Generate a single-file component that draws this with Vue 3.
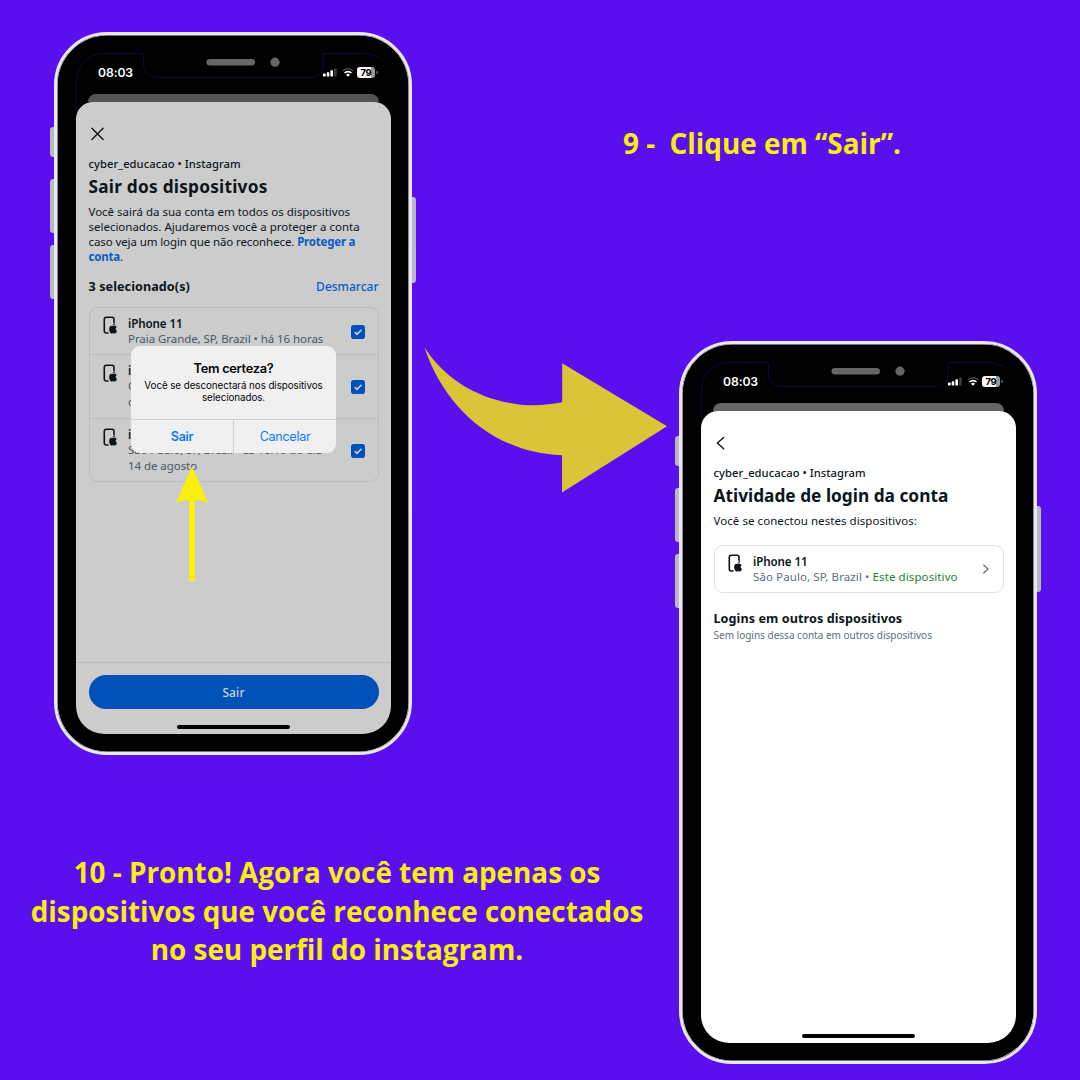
<script setup>
const phones = [
  { id: 'confirm', kind: 'dim', left: 54, top: 32 },
  { id: 'activity', kind: 'light', left: 679, top: 341 },
]
const devices = [
  { lines: ['Praia Grande, SP, Brazil • há 16 horas'] },
  { lines: ['Guarujá, SP, Brazil', 'de agosto'] },
  { lines: ['São Paulo, SP, Brazil • às 16:10 do dia', '14 de agosto'] },
]
</script>

<template>
  <main class="poster">
    <p class="caption step9">9 -&nbsp; Clique em “Sair”.</p>
    <p class="caption step10">10 - Pronto! Agora você tem apenas os<br />dispositivos que você reconhece conectados<br />no seu perfil do instagram.</p>

    <section
      v-for="p in phones"
      :key="p.id"
      class="phone"
      :class="p.kind"
      :style="{ left: p.left + 'px', top: p.top + 'px' }"
    >
      <i class="key k1"></i><i class="key k2"></i><i class="key k3"></i><i class="key k4"></i>
      <div class="body">
        <svg class="notch" width="357" height="90" viewBox="0 0 357 90" fill="none">
          <path d="M22.3 78V50C22.3 33 34 21.5 51 21.5H89.5V31C89.5 41 95 45.5 104 45.5H254C263 45.5 269.3 41 269.3 31V21.5H309C317 21.5 323 24 328 28" stroke="#160640" stroke-width="0.9" />
          <rect x="152.5" y="27" width="48.5" height="6.6" rx="3.3" fill="#666" />
          <circle cx="221" cy="30.2" r="4.6" fill="#666" />
        </svg>
        <header class="status">
          <span class="time">08:03</span>
          <svg class="signal" width="14" height="9" viewBox="0 0 14 9" fill="#fff">
            <rect x="0" y="5.6" width="2.6" height="3" rx=".7" />
            <rect x="3.7" y="4.2" width="2.6" height="4.4" rx=".7" />
            <rect x="7.4" y="2.2" width="2.6" height="6.4" rx=".7" />
            <rect x="11.1" y="0.2" width="2.6" height="8.4" rx=".7" fill="#3c3c3c" />
          </svg>
          <svg class="wifi" width="12" height="9" viewBox="0 0 12 9" fill="none">
            <path d="M.9 2.9A7.3 7.3 0 0 1 11.1 2.9" stroke="#444" stroke-width="1.5" />
            <path d="M2.5 5A4.9 4.9 0 0 1 9.5 5" stroke="#fff" stroke-width="1.7" />
            <path d="M6 8.8L4 6.8A2.9 2.9 0 0 1 8 6.8Z" fill="#fff" />
          </svg>
          <span class="battery">79</span><i class="nub"></i>
        </header>
        <div class="behind"></div>
        <div class="sheet">
          <svg v-if="p.kind === 'dim'" class="nav" width="20" height="14" viewBox="0 0 20 14" fill="none" stroke="#0c151b" stroke-width="1.4" stroke-linecap="round">
            <path d="M2.9 1.2L14.1 12.4M14.1 1.2L2.9 12.4" />
          </svg>
          <svg v-else class="nav" width="20" height="14" viewBox="0 0 20 14" fill="none" stroke="#0c151b" stroke-width="1.4" stroke-linecap="round">
            <path d="M9.7 1.4L3.4 7.1L9.7 12.8" />
          </svg>
          <p class="account">cyber_educacao • Instagram</p>

          <template v-if="p.kind === 'dim'">
            <h1 class="leave">Sair dos dispositivos</h1>
            <p class="intro">Você sairá da sua conta em todos os dispositivos<br />selecionados. Ajudaremos você a proteger a conta<br /><span class="tight">caso veja um login que não reconhece. </span><b>Proteger a<br />conta</b>.</p>
            <div class="pick"><h2>3 selecionado(s)</h2><span>Desmarcar</span></div>
            <ul class="card">
              <li v-for="(d, i) in devices" :key="i">
                <svg class="device" width="16" height="19" viewBox="0 0 16 19">
                  <path d="M5 17H3.3C2.1 17 1.3 16.2 1.3 15V3.4C1.3 2.2 2.1 1.3 3.3 1.3H9C10.2 1.3 11 2.2 11 3.4V6.3" fill="none" stroke="#0c151b" stroke-width="1.6" stroke-linecap="round" />
                  <path d="M10.2 10.1C9.2 9.5 6.1 9.4 6.1 13C6.1 15.6 7.7 17.9 9 17.6C9.8 17.2 10.6 17.2 11.4 17.6C12.6 17.9 13.7 16.2 14 15.1C12.2 14.2 12.3 12 13.7 11.1C12.9 9.7 11.2 9.7 10.2 10.1Z" fill="#0c151b" />
                  <path d="M10 9.5C9.9 8.2 10.9 7.2 12 7C12.1 8.4 11.2 9.4 10 9.5Z" fill="#0c151b" />
                </svg>
                <div class="info"><strong>iPhone 11</strong><span v-for="l in d.lines" :key="l" :class="{ long: l.startsWith('São') }">{{ l }}</span></div>
                <svg class="check" width="14" height="14" viewBox="0 0 14 14">
                  <rect width="14" height="14" rx="2.8" fill="#0052b8" />
                  <path d="M3.8 7.2L6 9.3L10.5 4.8" fill="none" stroke="#cdd3da" stroke-width="1.6" />
                </svg>
              </li>
            </ul>
            <footer class="foot"><button>Sair</button></footer>
          </template>

          <template v-else>
            <h1>Atividade de login da conta</h1>
            <p class="intro connected">Você se conectou nestes dispositivos:</p>
            <ul class="card">
              <li>
                <svg class="device" width="16" height="19" viewBox="0 0 16 19">
                  <path d="M5 17H3.3C2.1 17 1.3 16.2 1.3 15V3.4C1.3 2.2 2.1 1.3 3.3 1.3H9C10.2 1.3 11 2.2 11 3.4V6.3" fill="none" stroke="#0c151b" stroke-width="1.6" stroke-linecap="round" />
                  <path d="M10.2 10.1C9.2 9.5 6.1 9.4 6.1 13C6.1 15.6 7.7 17.9 9 17.6C9.8 17.2 10.6 17.2 11.4 17.6C12.6 17.9 13.7 16.2 14 15.1C12.2 14.2 12.3 12 13.7 11.1C12.9 9.7 11.2 9.7 10.2 10.1Z" fill="#0c151b" />
                  <path d="M10 9.5C9.9 8.2 10.9 7.2 12 7C12.1 8.4 11.2 9.4 10 9.5Z" fill="#0c151b" />
                </svg>
                <div class="info"><strong>iPhone 11</strong><span class="here">São Paulo, SP, Brazil • <em>Este dispositivo</em></span></div>
                <svg class="go" width="8" height="10" viewBox="0 0 8 10" fill="none" stroke="#5d6c7b" stroke-width="1.2">
                  <path d="M1.4 .7L6 5L1.4 9.3" />
                </svg>
              </li>
            </ul>
            <h2 class="others">Logins em outros dispositivos</h2>
            <p class="none">Sem logins dessa conta em outros dispositivos</p>
          </template>
          <div class="home"></div>
        </div>
      </div>

      <div v-if="p.kind === 'dim'" class="dialog" role="alertdialog">
        <h3>Tem certeza?</h3>
        <p>Você se desconectará nos dispositivos<br />selecionados.</p>
        <div class="actions"><b>Sair</b><span>Cancelar</span></div>
      </div>
    </section>

    <svg class="arrows" width="1080" height="1080" viewBox="0 0 1080 1080">
      <path d="M424.3 347C447 384 490 405 534 405.3C543 405 553 404 562.2 402.3V363.2L667 426.3L562 492.5V455.3C498 453 446 412 424.3 347Z" fill="#dac539" />
      <path d="M192 466.5L208.3 503.2Q202 500.4 195 500.2V581.5H189V500.2Q182 500.4 175.8 503.2Z" fill="#f8ef0c" />
    </svg>
  </main>
</template>

<style>
body { margin: 0; }
</style>

<style scoped>
.poster {
  position: relative;
  width: 1080px;
  height: 1080px;
  overflow: hidden;
  background: #590fee;
  font-family: "Noto Sans", sans-serif;
  color: #0c151b;
}
p, h1, h2, h3, ul { margin: 0; padding: 0; }
.caption {
  position: absolute;
  font: 700 27.85px/38.4px "Open Sans", sans-serif;
  color: #f8ef0c;
  text-align: center;
  white-space: nowrap;
}
.step9 { left: 562px; width: 400px; top: 124px; }
.step10 { left: 17px; width: 640px; top: 853.4px; }

.phone { position: absolute; width: 358px; height: 723px; }
.body {
  position: relative;
  box-sizing: border-box;
  width: 358px;
  height: 723px;
  border: 3px solid #ebe7f0;
  border-radius: 53px;
  background: #000;
  box-shadow: inset 0 0 0 .6px #ebe7f0;
  padding: 0 18.5px 18px 19px;
  display: flex;
  flex-direction: column;
}
.key { position: absolute; background: #bab9be; left: -4px; width: 8px; border-radius: 3px; }
.k1 { top: 95px; height: 30px; }
.k2 { top: 147px; height: 54px; }
.k3 { top: 213px; height: 54px; }
.k4 { left: 354px; top: 165px; height: 86px; }
.notch { position: absolute; left: -3px; top: -3px; }

.status {
  position: relative;
  height: 59px;
  padding: 32px 13px 0 22px;
  box-sizing: border-box;
  display: flex;
  align-items: flex-start;
  color: #fff;
  font-family: Inter, sans-serif;
}
.time { font-weight: 600; font-size: 12.2px; line-height: 11px; letter-spacing: -.1px; }
.signal { margin: 1px 0 0 auto; }
.wifi { margin: .5px 3px 0 5px; }
.battery {
  width: 18px; height: 10.5px; border-radius: 3px;
  background: linear-gradient(90deg, #fff 80%, #999 80%);
  color: #000; font-weight: 700; font-size: 9.5px; line-height: 11px; text-align: center; letter-spacing: -.2px;
}
.nub { width: 1.5px; height: 3.5px; margin: 3.5px 0 0 1px; background: #555; border-radius: 1px; }
.behind { height: 8px; margin: 0 12px; border-radius: 10px 10px 0 0; background: #666; flex: none; }
.dim .behind { background: #545454; }

.sheet {
  flex: 1;
  min-height: 0;
  box-sizing: border-box;
  border-radius: 17px 17px 28px 28px;
  background: #fff;
  padding: 25px 12px 0 12.5px;
  display: flex;
  flex-direction: column;
}
.dim .sheet { background: #ccc; }
.nav { margin-bottom: 15px; flex: none; }
.account { font-weight: 500; font-size: 11.2px; line-height: 15px; letter-spacing: .05px; white-space: nowrap; }
h1 { margin-top: 5px; font-weight: 700; font-size: 17.3px; line-height: 22px; white-space: nowrap; }
.leave { letter-spacing: .22px; }
.intro { margin-top: 5.6px; font-size: 11.5px; line-height: 15.2px; letter-spacing: -.01px; white-space: nowrap; }
.intro .tight { letter-spacing: -.1px; }
.intro b { color: #0a5bc8; letter-spacing: -.22px; }
.connected { letter-spacing: .06px; margin-bottom: 5px; }
.pick { display: flex; justify-content: space-between; margin-top: 13.5px; line-height: 18px; }
h2 { font-weight: 700; font-size: 12.6px; line-height: 18px; letter-spacing: .08px; }
.pick span { font-size: 12px; font-weight: 500; color: #0a5bc8; }
.card {
  list-style: none;
  margin-top: 11.2px;
  border: 1px solid #b9bdc2;
  border-radius: 9px;
}
.light .card { border-color: #dee3e9; margin-top: 12px; }
li { display: flex; align-items: flex-start; padding: 8px 13px 7.5px 13.5px; }
li + li { border-top: 1px solid #b9bdc2; padding-bottom: 9px; }
li:nth-child(3) { padding-bottom: 7.5px; }
.device { margin: 0 9px 0 0; flex: none; }
li + li .device { margin-top: 1px; }
.info { flex: 1; display: flex; flex-direction: column; white-space: nowrap; min-width: 0; }
.info strong { font-weight: 600; font-size: 11.6px; line-height: 15px; letter-spacing: -.1px; }
.info span { font-size: 11.5px; line-height: 15.5px; color: #4b5763; letter-spacing: -.06px; }
.info .long { letter-spacing: -.1px; }
.light .info span { color: #5d6c7b; }
.light .info .here { letter-spacing: .1px; }
.info em { font-style: normal; color: #23842f; }
.check, .go { align-self: center; flex: none; }
.check { position: relative; top: .5px; }
.others { margin-top: 17px; }
.none { font-size: 10px; line-height: 14px; color: #5d6c7b; white-space: nowrap; }
.foot { margin: auto -12px 0 -12.5px; border-top: 1px solid #bbb; padding: 12px 12px 0 12.5px; }
.foot button {
  display: block; width: 100%; height: 34px; border: 0; border-radius: 17px;
  background: #0052b8; color: #cbd3dd; font: 500 12px "Noto Sans", sans-serif; letter-spacing: .1px;
}
.home { width: 112.5px; height: 4px; margin: auto auto 5.5px; border-radius: 2px; background: #000; flex: none; }
.dim .home { margin-top: 15.5px; }

.dialog {
  position: absolute;
  left: 77px;
  top: 314px;
  width: 205px;
  height: 107px;
  border-radius: 9px;
  background: #f0f0f1;
  color: #050505;
  text-align: center;
  font-family: Inter, sans-serif;
  display: flex;
  flex-direction: column;
}
.dialog h3 { margin-top: 14px; font-weight: 600; font-size: 12.8px; line-height: 17px; letter-spacing: -.28px; }
.dialog p { font-size: 9.8px; line-height: 12.2px; letter-spacing: -.06px; white-space: nowrap; margin-top: 3px; }
.actions { margin-top: auto; height: 33.5px; display: flex; border-top: 1px solid #cfcfd0; color: #0a7aff; font-size: 12.6px; line-height: 33px; }
.actions > * { flex: 1; letter-spacing: -.3px; }
.actions b { font-weight: 600; border-right: 1px solid #cfcfd0; }
.arrows { position: absolute; left: 0; top: 0; pointer-events: none; }
</style>
